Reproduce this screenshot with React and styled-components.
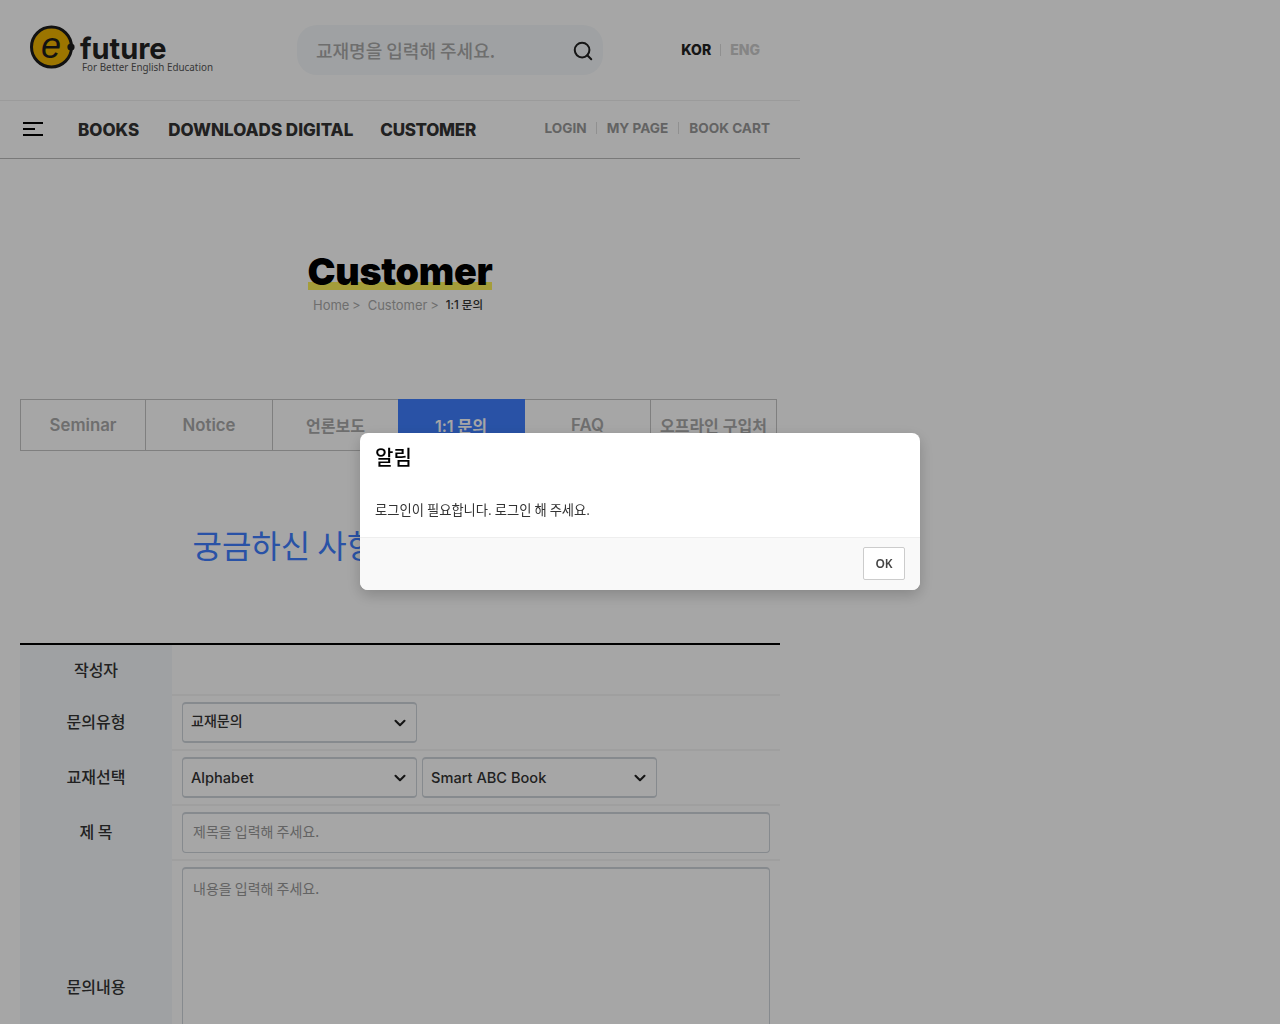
import React from 'react';
import styled, { createGlobalStyle } from 'styled-components';
import { Search } from 'lucide-react';

const latin = `Inter, "Noto Sans CJK KR", sans-serif`;
const korean = `"Noto Sans CJK KR", sans-serif`;
const chevron = `url("data:image/svg+xml,%3csvg xmlns='http://www.w3.org/2000/svg' viewBox='0 0 16 16'%3e%3cpath fill='none' stroke='%23222' stroke-linecap='round' stroke-linejoin='round' stroke-width='2.8' d='M2 5l6 6 6-6'/%3e%3c/svg%3e")`;

const GlobalStyle = createGlobalStyle`
    html, body {
        margin: 0;
        padding: 0;
        background: #fff;
        overflow: hidden;
        height: 1024px;
    }
    * {
        box-sizing: border-box;
    }
`;

const Page = styled.div`
    width: 800px;
    font-family: ${latin};
`;

const TopBar = styled.header`
    height: 101px;
    display: flex;
    align-items: center;
    border-bottom: 1px solid #eee;
    padding: 0 40px 1px 30px;
`;

const Logo = styled.a`
    display: flex;
    align-items: center;
    width: 267px;
    flex: none;
    svg {
        display: block;
        margin: -6px 4px 0 0;
    }
`;

const LogoText = styled.div`
    display: flex;
    flex-direction: column;
    margin-top: 11px;
    b {
        font-family: ${latin};
        font-size: 29px;
        line-height: 24px;
        font-weight: 700;
        color: #222;
    }
    span {
        font-family: "Noto Sans", sans-serif;
        font-size: 9.85px;
        line-height: 13px;
        margin-left: 2px;
        color: #555;
        white-space: nowrap;
    }
`;

const SearchBox = styled.div`
    width: 306px;
    height: 50px;
    flex: none;
    border-radius: 20px;
    background: #f5f8fa;
    display: flex;
    align-items: center;
    justify-content: space-between;
    padding: 0 9px 0 19px;
    font-family: ${korean};
    font-size: 18px;
    font-weight: 500;
    color: #aaa;
    svg {
        color: #222;
        margin-top: 2px;
    }
`;

const Lang = styled.div`
    margin-left: auto;
    display: flex;
    align-items: center;
    font-size: 14px;
    font-weight: 800;
`;

const LangLink = styled.a`
    color: ${p => (p.$dim ? '#ccc' : '#222')};
`;

const TinyBar = styled.i`
    display: block;
    width: 1px;
    height: 12px;
    background: #ddd;
    margin: 0 ${p => p.$gap || 10}px;
`;

const NavBar = styled.nav`
    height: 58px;
    display: flex;
    align-items: center;
    padding: 0 30px 0 23px;
    border-bottom: 1px solid #bbb;
`;

const Burger = styled.div`
    width: 20px;
    height: 14px;
    margin: -2px 35px 0 0;
    display: flex;
    flex-direction: column;
    justify-content: space-between;
    span {
        height: 2px;
        background: #000;
    }
    span:nth-child(2) {
        width: 12px;
    }
`;

const MainLink = styled.a`
    font-size: 17px;
    font-weight: 800;
    color: #333;
    white-space: nowrap;
    margin-right: ${p => p.$gap}px;
    letter-spacing: ${p => p.$ls || 0}px;
`;

const SubLinks = styled.div`
    margin-left: auto;
    display: flex;
    align-items: center;
    font-size: 13.6px;
    font-weight: 700;
    color: #999;
    margin-top: -4px;
`;

const Hero = styled.section`
    padding-top: 92px;
    display: flex;
    flex-direction: column;
    align-items: center;
    height: 240px;
`;

const Title = styled.h1`
    margin: 0;
    font-size: 37.6px;
    line-height: 42px;
    font-weight: 900;
    color: #000;
    background: linear-gradient(transparent 75%, #fdf15a 75%, #fdf15a 93%, transparent 93%);
    letter-spacing: -.3px;
`;

const Crumbs = styled.div`
    display: flex;
    align-items: center;
    margin: 3px 0 0 -4px;
    font-size: 13px;
    line-height: 18px;
    color: #aaa;
    span {
        margin-right: 7px;
        word-spacing: -1px;
    }
    strong {
        font-size: 11.5px;
        font-weight: 500;
        color: #333;
    }
`;

const Tabs = styled.ul`
    list-style: none;
    margin: 0 0 0 20px;
    padding: 0;
    display: grid;
    grid-template-columns: 126px 127px 126px 126px 126px 126px;
    width: 757px;
    height: 52px;
`;

const Tab = styled.li`
    border: 1px solid ${p => (p.$active ? '#3f7fff' : '#c4c4c4')};
    border-left-width: ${p => (p.$first ? 1 : 0)}px;
    background: ${p => (p.$active ? '#3f7fff' : '#fff')};
    color: ${p => (p.$active ? '#fff' : '#aaa')};
    font-size: ${p => (p.$ko ? 16 : 16.8)}px;
    font-weight: 600;
    display: flex;
    align-items: center;
    justify-content: center;
    margin-left: ${p => (p.$active ? -1 : 0)}px;
`;

const Heading = styled.h2`
    margin: 71px 0 0;
    height: 121px;
    padding-right: 2px;
    font-family: ${korean};
    font-size: 32px;
    line-height: 44px;
    font-weight: 400;
    color: #3f7fff;
    text-align: center;
`;

const Form = styled.form`
    width: 760px;
    margin-left: 20px;
    border-top: 2px solid #000;
`;

const Row = styled.div`
    display: flex;
    height: ${p => p.$h}px;
    border-bottom: 2px solid #f4f4f4;
`;

const Label = styled.div`
    width: 152px;
    flex: none;
    margin-bottom: -2px;
    background: #f5f8fa;
    display: flex;
    align-items: center;
    justify-content: center;
    padding-bottom: ${p => p.$pb || 0}px;
    font-family: ${korean};
    font-size: 16px;
    font-weight: 500;
    color: #333;
`;

const Field = styled.div`
    flex: 1;
    display: flex;
    gap: 5px;
    align-items: flex-start;
    padding: 6px 10px 0;
`;

const Select = styled.select`
    appearance: none;
    width: 235px;
    height: 41px;
    padding: 0 8px ${p => (p.$ko ? 5 : 0)}px;
    border: 1px solid #ced4da;
    border-width: 2px 1px;
    border-radius: 4px;
    background: #fff ${chevron} no-repeat right 10px center / 12px 12px;
    font-family: ${p => (p.$ko ? korean : latin)};
    font-size: ${p => (p.$ko ? 14 : 14.6)}px;
    font-weight: 500;
    color: #333;
`;

const TextInput = styled.input`
    width: 100%;
    height: 41px;
    padding: 0 10px 5px;
    border: 1px solid #ced4da;
    border-top-width: 2px;
    border-radius: 4px;
    font-family: ${korean};
    font-size: 14px;
    color: #333;
    &::placeholder {
        color: #999;
        opacity: 1;
    }
`;

const TextArea = styled.textarea`
    width: 100%;
    height: 240px;
    padding: 9px 10px;
    border: 1px solid #ced4da;
    border-top-width: 2px;
    border-radius: 4px;
    resize: none;
    font-family: ${korean};
    font-size: 14px;
    &::placeholder {
        color: #999;
        opacity: 1;
    }
`;

const Backdrop = styled.div`
    position: fixed;
    inset: 0;
    background: rgba(0, 0, 0, .35);
`;

const Modal = styled.div`
    position: fixed;
    top: 433px;
    left: 360px;
    width: 560px;
    height: 157px;
    border-radius: 8px;
    background: #fff;
    overflow: hidden;
    display: flex;
    flex-direction: column;
    box-shadow: 0 5px 15px rgba(0, 0, 0, .2);
    font-family: ${korean};
`;

const ModalHead = styled.div`
    padding: 9px 15px 0;
    height: 60px;
    font-size: 20px;
    line-height: 30px;
    font-weight: 500;
    color: #000;
`;

const ModalBody = styled.div`
    padding: 0 15px;
    height: 44px;
    font-size: 13.3px;
    line-height: 33px;
    color: #333;
`;

const ModalFoot = styled.div`
    flex: 1;
    border-top: 1px solid #eee;
    background: #f9f9f9;
    display: flex;
    justify-content: flex-end;
    align-items: flex-start;
    padding: 9px 15px 0;
`;

const OkButton = styled.button`
    width: 42px;
    height: 33px;
    padding: 0;
    background: #fff;
    border: 1px solid #ccc;
    border-radius: 2px;
    font-family: "Noto Sans", sans-serif;
    font-size: 12px;
    font-weight: 600;
    color: #444;
`;

function LogoMark() {
    return (
        <svg width="46" height="44" viewBox="0 0 46 44">
            <circle cx="21.5" cy="22" r="20" fill="#f0b400" stroke="#1c1c1c" strokeWidth="3" />
            <circle cx="41" cy="22" r="3.6" fill="#1c1c1c" />
            <text x="21" y="33" textAnchor="middle" fontFamily="Liberation Sans" fontStyle="italic" fontSize="36" fill="#1c1c1c">e</text>
        </svg>
    );
}

const tabs = [
    { name: 'Seminar' },
    { name: 'Notice' },
    { name: '언론보도', ko: true },
    { name: '1:1 문의', ko: true },
    { name: 'FAQ' },
    { name: '오프라인 구입처', ko: true },
];

export default function App() {
    return (
        <>
            <GlobalStyle />
            <Page>
                <TopBar>
                    <Logo>
                        <LogoMark />
                        <LogoText>
                            <b>future</b>
                            <span>For Better English Education</span>
                        </LogoText>
                    </Logo>
                    <SearchBox>
                        교재명을 입력해 주세요.
                        <Search size={22} strokeWidth={2.2} />
                    </SearchBox>
                    <Lang>
                        <LangLink>KOR</LangLink>
                        <TinyBar $gap={9} />
                        <LangLink $dim>ENG</LangLink>
                    </Lang>
                </TopBar>
                <NavBar>
                    <Burger><span /><span /><span /></Burger>
                    <MainLink $gap={29}>BOOKS</MainLink>
                    <MainLink $gap={27}>DOWNLOADS DIGITAL</MainLink>
                    <MainLink $gap={0} $ls={-0.3}>CUSTOMER</MainLink>
                    <SubLinks>
                        LOGIN
                        <TinyBar $gap={9.5} />
                        MY PAGE
                        <TinyBar />
                        BOOK CART
                    </SubLinks>
                </NavBar>
                <Hero>
                    <Title>Customer</Title>
                    <Crumbs>
                        <span>Home &gt;</span>
                        <span>Customer &gt;</span>
                        <strong>1:1 문의</strong>
                    </Crumbs>
                </Hero>
                <Tabs>
                    {tabs.map((tab, i) => (
                        <Tab key={tab.name} $first={i === 0} $active={i === 3} $ko={tab.ko}>{tab.name}</Tab>
                    ))}
                </Tabs>
                <Heading>궁금하신 사항을 문의해 주세요.</Heading>
                <Form>
                    <Row $h={51}>
                        <Label $pb={3}>작성자</Label>
                    </Row>
                    <Row $h={55}>
                        <Label $pb={6}>문의유형</Label>
                        <Field>
                            <Select $ko defaultValue="교재문의">
                                <option>교재문의</option>
                            </Select>
                        </Field>
                    </Row>
                    <Row $h={55}>
                        <Label $pb={6}>교재선택</Label>
                        <Field>
                            <Select><option>Alphabet</option></Select>
                            <Select><option>Smart ABC Book</option></Select>
                        </Field>
                    </Row>
                    <Row $h={55}>
                        <Label $pb={6}>제 목</Label>
                        <Field>
                            <TextInput placeholder="제목을 입력해 주세요." />
                        </Field>
                    </Row>
                    <Row $h={254}>
                        <Label $pb={4}>문의내용</Label>
                        <Field>
                            <TextArea placeholder="내용을 입력해 주세요." />
                        </Field>
                    </Row>
                </Form>
            </Page>
            <Backdrop />
            <Modal>
                <ModalHead>알림</ModalHead>
                <ModalBody>로그인이 필요합니다. 로그인 해 주세요.</ModalBody>
                <ModalFoot>
                    <OkButton>OK</OkButton>
                </ModalFoot>
            </Modal>
        </>
    );
}
